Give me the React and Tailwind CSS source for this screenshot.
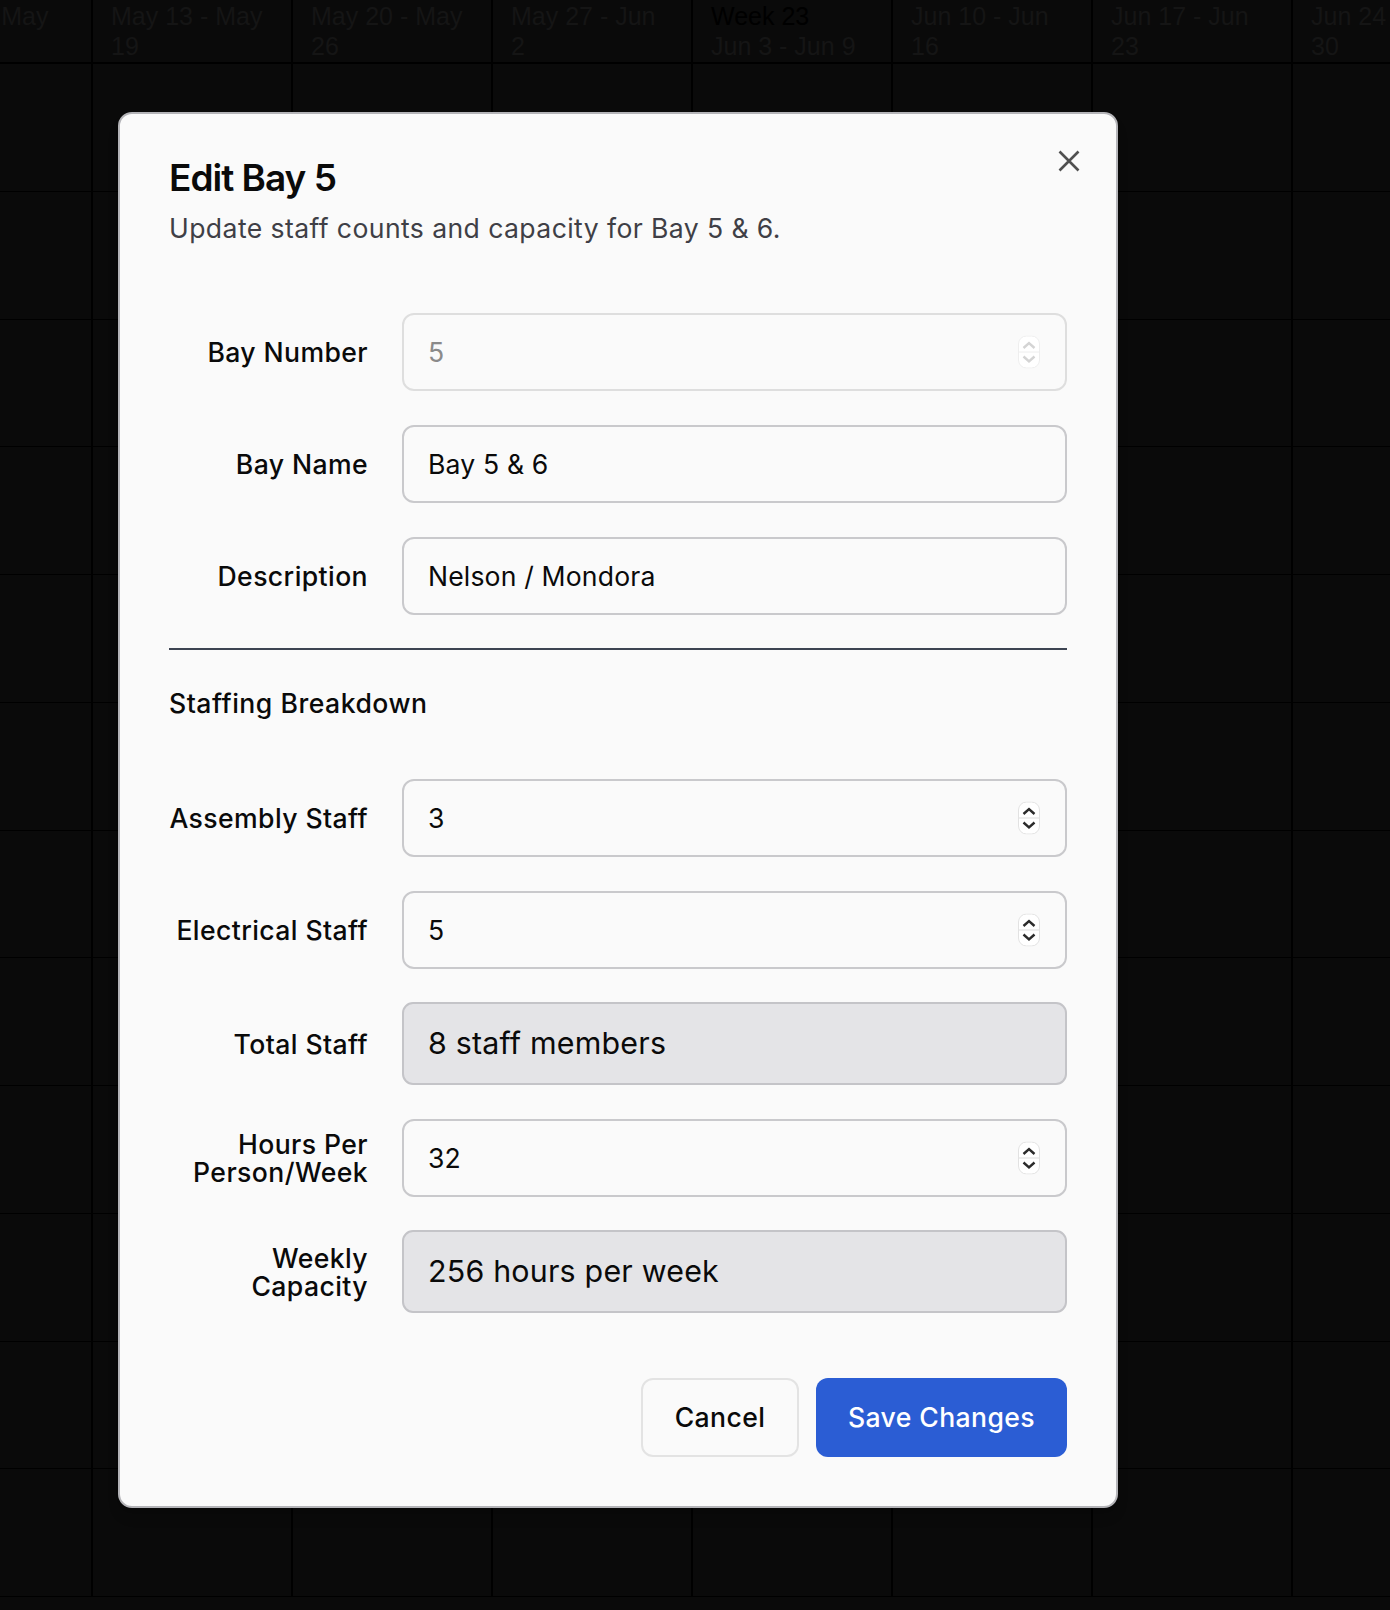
import React from "react";

const weeks = [
  { top: "May 6 - May 12" },
  { top: "May 13 - May 19" },
  { top: "May 20 - May 26" },
  { top: "May 27 - Jun 2" },
  { top: "Week 23", sub: "Jun 3 - Jun 9", current: true },
  { top: "Jun 10 - Jun 16" },
  { top: "Jun 17 - Jun 23" },
  { top: "Jun 24 - Jun 30" },
];

function Spinner({ disabled }) {
  const stroke = disabled ? "#d4d4d4" : "#2b2b2b";
  return (
    <svg
      width="22"
      height="33"
      viewBox="0 0 22 33"
      className="absolute right-[27px] top-1/2 -translate-y-1/2 pointer-events-none"
    >
      <rect
        x="0.5"
        y="0.5"
        width="21"
        height="32"
        rx="8"
        fill="#ffffff"
        stroke={disabled ? "#eeeeee" : "#e2e2e2"}
      />
      <line x1="1" y1="16.5" x2="21" y2="16.5" stroke={disabled ? "#eeeeee" : "#dddddd"} />
      <path d="M5.5 12.5 L11 7.5 L16.5 12.5" fill="none" stroke={stroke} strokeWidth="2.4" />
      <path d="M5.5 21 L11 26 L16.5 21" fill="none" stroke={stroke} strokeWidth="2.4" />
    </svg>
  );
}

function Field({ label, children }) {
  return (
    <div className="grid grid-cols-4 items-center gap-x-[34px]">
      <label className="-ml-[4px] text-right text-[26.6px] leading-[28px] tracking-[0.4px] font-medium text-[#0a0a0a]">
        {label}
      </label>
      <div className="col-span-3">{children}</div>
    </div>
  );
}

function TextInput({ value, number, disabled }) {
  return (
    <div className="relative">
      <input
        type="text"
        readOnly
        value={value}
        className={`w-full h-[78px] rounded-[12px] border-2 bg-[#fafafa] pl-[24px] pr-[60px] text-[26.6px] tracking-[0.15px] outline-none ${
          disabled
            ? "border-[#dedede] text-[#8a8a8a]"
            : "border-[#c9c9cc] text-[#0a0a0a]"
        }`}
      />
      {number && <Spinner disabled={disabled} />}
    </div>
  );
}

function ReadOnlyBox({ children }) {
  return (
    <div className="h-[83px] flex items-center rounded-[11px] border-2 border-[#c4c4c8] bg-[#e4e4e7] pl-[24px] text-[30.4px] tracking-[0.2px] text-[#0a0a0a]">
      {children}
    </div>
  );
}

export default function App() {
  return (
    <div className="relative w-[1390px] h-[1610px] overflow-hidden bg-[#0a0a0a] font-['Liberation_Sans',Arial,sans-serif]">
      {/* Background week grid */}
      <div className="ml-[-107px] w-max">
        <div className="flex h-[64px] border-b-2 border-black">
          {weeks.map((w) => (
            <div
              key={w.top}
              className="w-[200px] shrink-0 border-r-2 border-black pl-[18px] pr-[18px] pt-[1px] text-[25px] leading-[30px]"
            >
              <div className={w.current ? "text-black" : "text-[#151515]"}>{w.top}</div>
              {w.sub && <div className="text-[#151515]">{w.sub}</div>}
            </div>
          ))}
        </div>
        {Array.from({ length: 12 }).map((_, r) => (
          <div key={r} className="flex h-[127.75px] border-b border-black">
            {weeks.map((w) => (
              <div key={w.top} className="w-[200px] shrink-0 border-r-2 border-black" />
            ))}
          </div>
        ))}
      </div>

      {/* Edit dialog */}
      <div className="absolute left-[118px] top-[112px] w-[1000px] h-[1396px] rounded-[14px] border-2 border-[#b4b4b8] bg-[#fafafa] pl-[49px] pr-[49px] pt-[45px] shadow-lg font-['Inter',sans-serif]">
        <button className="absolute right-[35px] top-[35px] w-[24px] h-[24px]">
          <svg width="24" height="24" viewBox="0 0 24 24">
            <path
              d="M2.5 2.5 L21.5 21.5 M21.5 2.5 L2.5 21.5"
              stroke="#505050"
              strokeWidth="2.6"
              fill="none"
            />
          </svg>
        </button>

        <h2 className="text-[37px] leading-[38px] font-semibold tracking-[-1px] text-[#0a0a0a]">
          Edit Bay 5
        </h2>
        <p className="mt-[12px] text-[26.6px] leading-[38px] tracking-[0.4px] text-[#3f3f46]">
          Update staff counts and capacity for Bay 5 &amp; 6.
        </p>

        <div className="mt-[66px] flex flex-col gap-[34px]">
          <Field label="Bay Number">
            <TextInput value="5" number disabled />
          </Field>
          <Field label="Bay Name">
            <TextInput value="Bay 5 & 6" />
          </Field>
          <Field label="Description">
            <TextInput value="Nelson / Mondora" />
          </Field>
        </div>

        <div className="mt-[33px] border-t-2 border-[#3d4452]" />

        <h3 className="mt-[34px] text-[26.6px] leading-[38px] tracking-[0.5px] font-medium text-[#0a0a0a]">
          Staffing Breakdown
        </h3>

        <div className="mt-[57px] flex flex-col gap-[33.5px]">
          <Field label="Assembly Staff">
            <TextInput value="3" number />
          </Field>
          <Field label="Electrical Staff">
            <TextInput value="5" number />
          </Field>
          <Field label="Total Staff">
            <ReadOnlyBox>8 staff members</ReadOnlyBox>
          </Field>
          <Field label="Hours Per Person/Week">
            <TextInput value="32" number />
          </Field>
          <Field label="Weekly Capacity">
            <ReadOnlyBox>256 hours per week</ReadOnlyBox>
          </Field>
        </div>

        <div className="mt-[65px] flex justify-end gap-[17px]">
          <button className="h-[79px] w-[158px] rounded-[12px] border-2 border-[#e3e3e3] bg-[#fafafa] text-[26.6px] tracking-[0.4px] font-medium text-[#0a0a0a]">
            Cancel
          </button>
          <button className="h-[79px] w-[251px] rounded-[12px] bg-[#2b5dd4] text-[26.6px] tracking-[0.4px] font-medium text-white">
            Save Changes
          </button>
        </div>
      </div>
    </div>
  );
}
